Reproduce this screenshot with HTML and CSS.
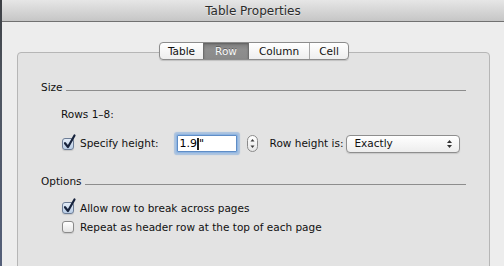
FILE: index.html
```html
<!DOCTYPE html>
<html>
<head>
<meta charset="utf-8">
<link rel="stylesheet" href="styles.css">
</head>
<body>
<div class="desk">
  <div class="edge"></div>
  <div class="window">
    <div class="titlebar">Table Properties</div>
    <div class="content">
      <div class="tabs-row">
        <div class="segmented">
          <div class="seg seg-table">Table</div>
          <div class="seg seg-row selected">Row</div>
          <div class="seg seg-column">Column</div>
          <div class="seg seg-cell">Cell</div>
        </div>
      </div>
      <div class="group">
        <div class="legend"><span>Size</span></div>
        <div class="label-row">Rows 1–8:</div>
        <div class="field-row">
          <span class="checkbox checked"><svg class="tick" width="14" height="16" viewBox="0 0 14 16"><path d="M3 9.2 L6 13 L12.5 1.5" fill="none" stroke="#17233d" stroke-width="2.2" stroke-linecap="round" stroke-linejoin="round"/></svg></span>
          <span class="cb-label">Specify height:</span>
          <div class="textfield"><span>1.9</span><span class="ibeam"></span><span>"</span></div>
          <svg class="stepper" width="11" height="17" viewBox="0 0 11 17">
            <defs><linearGradient id="sg" x1="0" y1="0" x2="0" y2="1"><stop offset="0" stop-color="#ffffff"/><stop offset="1" stop-color="#e6e6e6"/></linearGradient></defs>
            <rect x="0.5" y="0.5" width="10" height="16" rx="5" fill="url(#sg)" stroke="#8a8a8a"/>
            <path d="M3.5 6.5 L5.5 4 L7.5 6.5 Z" fill="#3a3a3a"/>
            <path d="M3.5 10.5 L5.5 13 L7.5 10.5 Z" fill="#3a3a3a"/>
          </svg>
          <span class="rh-label">Row height is:</span>
          <div class="select">
            <span>Exactly</span>
            <svg class="updown" width="7" height="10" viewBox="0 0 7 10"><path d="M1 4 L3.5 1 L6 4 Z" fill="#333"/><path d="M1 6 L3.5 9 L6 6 Z" fill="#333"/></svg>
          </div>
        </div>
        <div class="legend legend-options"><span>Options</span></div>
        <div class="check-row first">
          <span class="checkbox checked"><svg class="tick" width="14" height="16" viewBox="0 0 14 16"><path d="M3 9.2 L6 13 L12.5 1.5" fill="none" stroke="#17233d" stroke-width="2.2" stroke-linecap="round" stroke-linejoin="round"/></svg></span>
          <span class="cb-label">Allow row to break across pages</span>
        </div>
        <div class="check-row second">
          <span class="checkbox"></span>
          <span class="cb-label">Repeat as header row at the top of each page</span>
        </div>
      </div>
    </div>
  </div>
</div>
</body>
</html>
```
FILE: styles.css
```css
html, body {
  margin: 0;
  padding: 0;
  overflow: hidden;
}
body {
  font-family: "DejaVu Sans", "Liberation Sans", sans-serif;
  font-size: 10.5px;
  line-height: 13px;
  color: #111;
}
.desk {
  display: flex;
  width: 504px;
  height: 266px;
  overflow: hidden;
}
.edge {
  width: 2px;
  flex: none;
  background: linear-gradient(#3c3f44, #4f5660 30%, #55607a);
}
.window {
  flex: 1;
  background: #ededed;
  overflow: hidden;
}
.titlebar {
  height: 19px;
  padding-top: 2px;
  line-height: 19px;
  font-size: 12px;
  text-align: center;
  color: #2b2b2b;
  text-shadow: 0 1px 0 rgba(255,255,255,0.5);
  background: linear-gradient(#e6e6e6, #c6c6c6);
  border-bottom: 1px solid #717171;
}
.content {
  padding: 20px 14px 0 15px;
}
.tabs-row {
  display: flex;
  justify-content: center;
  position: relative;
  z-index: 1;
  height: 18px;
}
.segmented {
  display: flex;
  height: 16px;
  border: 1px solid #8c8c8c;
  border-radius: 4px;
  background: linear-gradient(#ffffff, #eeeeee);
  box-shadow: 0 1px 1px rgba(0,0,0,0.15);
  overflow: hidden;
  margin-left: 1px;
}
.seg {
  line-height: 16px;
  text-align: center;
  color: #111;
  border-left: 1px solid #a8a8a8;
}
.seg-table { width: 43px; border-left: 0; }
.seg-row { width: 44px; }
.seg-column { width: 60px; }
.seg-cell { width: 38px; }
.seg.selected {
  background: linear-gradient(#7c7c7c, #8e8e8e 40%, #8a8a8a);
  border-left-color: #6e6e6e;
  color: #fafafa;
  text-shadow: 0 -1px 0 rgba(0,0,0,0.35);
  box-shadow: inset 0 1px 2px rgba(0,0,0,0.25);
}
.seg-column { border-left-color: #6e6e6e; }
.group {
  margin-top: -8px;
  height: 260px;
  border: 1px solid #b6b6b6;
  border-radius: 4px;
  background: #e3e3e3;
  padding: 28px 23px 0 23px;
}
.legend {
  display: flex;
  align-items: baseline;
  height: 13px;
}
.legend::after {
  content: "";
  flex: 1;
  height: 0;
  border-top: 1px solid #8d8d8d;
  margin-left: 3px;
}
.legend-options {
  margin-top: 20px;
}
.label-row {
  margin-top: 14px;
  margin-left: 20px;
}
.field-row {
  display: flex;
  align-items: center;
  height: 23px;
  margin-top: 11px;
  margin-left: 21px;
}
.checkbox {
  position: relative;
  flex: none;
  width: 10px;
  height: 10px;
  border: 1px solid #8a8a8a;
  border-radius: 3px;
  background: linear-gradient(#ffffff, #e4e4e4);
  box-shadow: 0 1px 1px rgba(0,0,0,0.12);
}
.checkbox.checked {
  border-color: #6d7d96;
  background: linear-gradient(#e3ecf7, #b9cde6);
}
.tick {
  position: absolute;
  left: -1px;
  top: -5px;
}
.cb-label {
  margin-left: 6px;
}
.textfield {
  display: flex;
  align-items: center;
  box-sizing: border-box;
  width: 60px;
  height: 17px;
  margin-left: 18px;
  padding-left: 2px;
  background: #ffffff;
  border: 1px solid #5f8dc6;
  box-shadow: 0 0 0 1px #8fb5e2, 0 0 1px 3px rgba(120,165,220,0.55);
  border-radius: 1px;
  font-size: 11px;
  color: #000;
}
.ibeam {
  width: 2px;
  height: 12px;
  background: #222;
  margin: 0 0 0 0;
}
.stepper {
  flex: none;
  margin-left: 10px;
}
.rh-label {
  margin-left: 12px;
}
.select {
  display: flex;
  align-items: center;
  justify-content: space-between;
  box-sizing: border-box;
  width: 114px;
  height: 18px;
  margin-left: 3px;
  padding: 0 6px 0 7px;
  border: 1px solid #8e8e8e;
  border-radius: 4px;
  background: linear-gradient(#ffffff, #ededed);
  box-shadow: 0 1px 1px rgba(0,0,0,0.12);
}
.check-row {
  display: flex;
  align-items: center;
  height: 14px;
  margin-left: 21px;
}
.check-row.first { margin-top: 13px; }
.check-row.second { margin-top: 5px; }
```
